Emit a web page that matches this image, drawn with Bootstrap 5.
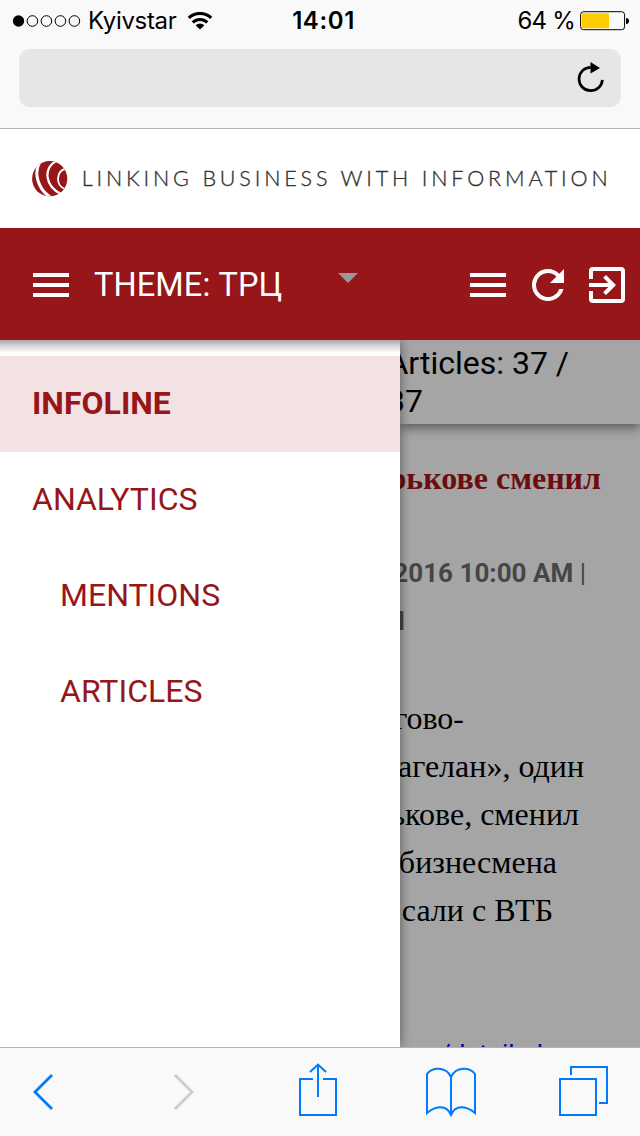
<!DOCTYPE html>
<html lang="en">
<head>
<meta charset="utf-8">
<meta name="viewport" content="width=device-width, initial-scale=1">
<title>Infoline</title>
<link href="https://cdn.jsdelivr.net/npm/bootstrap@5.3.0/dist/css/bootstrap.min.css" rel="stylesheet">
<style>
body{width:640px;height:1136px;font-family:Roboto,sans-serif;color:#000;background:#fff}
svg{display:block;flex:none}
.chrome-top{height:129px;background:#f9f9f9;border-bottom:1px solid #b2b2b2}
.statusbar{height:40px;font:400 24px/40px Inter,sans-serif;padding:1px 11px 0 12px}
.statusbar>div{flex:1 1 0}
.clock{flex:none!important;font-weight:600;letter-spacing:.6px;margin:0 -3px 0 3px}
.carrier{letter-spacing:-.35px;margin-left:7px}
.battery-level{letter-spacing:-.8px;margin-right:5px}
.urlbar{height:58px;margin:9px 19px 0;border-radius:11px;background:#e5e6e8;padding-right:16px}
.brandbar{height:99px;padding:1px 0 0 32px}
.appbar{height:112px;background:#96161a;color:#fff;padding:2px 15px 0 33px}
.theme-name{font-size:32.500px;line-height:48px;margin:0 0 0 25px;width:190px;letter-spacing:.1px;white-space:nowrap}
.drawer{width:400px;flex:none;padding-top:16px;background:linear-gradient(#a9a9a9,#cfcfcf 5px,#f4f4f4 11px,#fff 13px) #fff;background-size:100% 16px;background-repeat:no-repeat;box-shadow:1px 0 10px rgba(0,0,0,.4);z-index:2}
.drawer .list-group-item{height:96px;padding:0 32px;font-size:32px;line-height:94px;color:#96161a;background:transparent;border:0}
.drawer .list-group-item.active{background:#f2e2e3;font-weight:700}
.drawer .list-group-item.nested{padding-left:60px}
.content{width:240px;background:#a5a5a5}
.counter{height:84px;font-size:32px;line-height:38px;padding-top:4px;box-shadow:0 4px 10px rgba(0,0,0,.45)}
.line{display:flex;justify-content:flex-end;white-space:nowrap}
.serif{font-family:"Liberation Serif",serif;font-size:32px;line-height:48px}
.headline{font-weight:700;color:#6b0d11;margin-top:30px}
.meta{font-size:26px;line-height:48px;font-weight:700;color:#464646;margin-top:47px}
.story{margin-top:49px}
.source{color:#0000a0;margin-top:96px;font-size:26px;line-height:48px}
.browserbar{height:89px;flex:none;background:#f9f9f9;border-top:1px solid #b2b2b2;padding:0 32px 0 32px;z-index:3}
.forward{margin-left:119px}.share{margin:-4px 0 0 104px}.book{margin-left:89px}.tabs-icon{margin:-2px 0 0 auto}
</style>
</head>
<body class="d-flex flex-column overflow-hidden m-0">
<header class="chrome-top flex-shrink-0">
  <div class="statusbar d-flex align-items-center">
    <div class="d-flex align-items-center">
      <svg width="69" height="14" viewBox="0 0 69 14" fill="none" stroke="#000"><circle cx="6.500" cy="7" r="5.700" fill="#000" stroke="none"/><circle cx="20.400" cy="7" r="5.300"/><circle cx="34.400" cy="7" r="5.300"/><circle cx="48.400" cy="7" r="5.300"/><circle cx="62.400" cy="7" r="5.300"/></svg>
      <span class="carrier">Kyivstar</span>
      <svg style="margin-left:11px" width="26" height="18" viewBox="0 0 26 18" fill="none" stroke="#000" stroke-width="3"><path d="M1.800 5.800A16.500 16.500 0 0 1 24.200 5.800M5.700 10.400A10.500 10.500 0 0 1 20.300 10.400"/><path d="M13 17.500L8.600 13.200A6.300 6.300 0 0 1 17.400 13.200Z" fill="#000" stroke="none"/></svg>
    </div>
    <span class="clock">14:01</span>
    <div class="d-flex align-items-center justify-content-end">
      <span class="battery-level">64 %</span>
      <svg width="49" height="20" viewBox="0 0 49 20"><rect x=".6" y=".7" width="44" height="18" rx="3" fill="none" stroke="#000"/><path d="M2 2.200H29V17.200H2Z" fill="#fc0"/><path d="M46 7q3 0 3 3t-3 3z"/></svg>
    </div>
  </div>
  <div class="urlbar d-flex align-items-center justify-content-end">
    <svg width="28" height="32" viewBox="0 0 28 32"><path d="M13.700 5.300A11.700 11.700 0 1 0 25.400 17.800" fill="none" stroke="#000" stroke-width="2.700"/><path d="M13.500 0L23 6L13.500 11.500Z"/></svg>
  </div>
</header>
<div class="brandbar d-flex align-items-center flex-shrink-0">
  <svg width="36" height="36" viewBox="0 0 36 36"><defs><clipPath id="globe"><circle cx="17.700" cy="17.700" r="17.600"/></clipPath></defs><g clip-path="url(#globe)"><path fill="#96161a" d="M0 0H36V36H0z"/><g fill="none" stroke="#fff"><path stroke-width="3" d="M7.500 2C2 11 5 27 18 36"/><path stroke-width="2.200" d="M24 0C11 8 13 25 29 33"/><path stroke-width="1.800" d="M34 7.500C23.500 10 23.500 25 33 28"/></g></g></svg>
  <svg width="572" height="36" viewBox="0 0 572 36"><text x="13.700" y="25" textLength="526" font-family="Lato" font-weight="300" font-size="21.500" fill="#333" stroke="#333" stroke-width=".35">LINKING BUSINESS WITH INFORMATION</text></svg>
</div>
<nav class="appbar d-flex align-items-center flex-shrink-0">
  <svg width="36" height="24" viewBox="0 0 36 24" fill="#fff"><path d="M0 0H36V4H0zM0 10H36V14H0zM0 20H36V24H0z"/></svg>
  <span class="theme-name">THEME: ТРЦ</span>
  <svg style="margin:0 0 14px 54px" width="20" height="10" viewBox="0 0 20 10"><path d="M0 0H20L10 10z" fill="#999"/></svg>
  <div class="d-flex align-items-center ms-auto">
    <svg width="36" height="24" viewBox="0 0 36 24" fill="#fff"><path d="M0 0H36V4H0zM0 10H36V14H0zM0 20H36V24H0z"/></svg>
    <svg style="margin:0 24px 0 26px" width="33" height="32" viewBox="4 4 16.500 16"><path fill="#fff" d="M17.650 6.350A7.960 7.960 0 0 0 12 4a8 8 0 1 0 7.730 10h-2.080A6 6 0 1 1 12 6c1.660 0 3.140.690 4.220 1.780L13 11h7V4z"/></svg>
    <svg width="36" height="36" viewBox="1 3 18 18"><path fill="#fff" d="M8.090 15.590L9.500 17l5-5-5-5-1.410 1.410L10.670 11H1v2h9.670zM17 3H3a2 2 0 0 0-2 2v4h2V5h14v14H3v-4H1v4a2 2 0 0 0 2 2h14a2 2 0 0 0 2-2V5a2 2 0 0 0-2-2z"/></svg>
  </div>
</nav>
<main class="d-flex overflow-hidden flex-grow-1" style="min-height:0">
  <aside class="drawer position-relative">
    <div class="list-group list-group-flush">
      <a class="list-group-item active">INFOLINE</a>
      <a class="list-group-item">ANALYTICS</a>
      <a class="list-group-item nested">MENTIONS</a>
      <a class="list-group-item nested">ARTICLES</a>
    </div>
  </aside>
  <article class="content">
    <div class="counter">
      <div class="line" style="padding-right:71px">Articles: 37 /</div>
      <div class="line" style="padding-right:217px">37</div>
    </div>
    <div class="line serif headline" style="padding-right:39px">рькове сменил</div>
    <div class="meta">
      <div class="line" style="padding-right:54px"><span>2016 10:00 AM <span class="fw-normal">|</span></span></div>
      <div class="line" style="padding-right:235px">И</div>
    </div>
    <div class="serif story">
      <div class="line" style="padding-right:176px">гово-</div>
      <div class="line" style="padding-right:56px">агелан», один</div>
      <div class="line" style="padding-right:61px">ькове, сменил</div>
      <div class="line" style="padding-right:83px">бизнесмена</div>
      <div class="line" style="padding-right:87px">сали с ВТБ</div>
    </div>
    <div class="line source" style="padding-right:97px">/detailed</div>
  </article>
</main>
<footer class="browserbar d-flex align-items-center">
  <svg width="22" height="38" viewBox="0 0 22 38" fill="none" stroke="#007aff" stroke-width="2.800"><path d="M20 2L3 19L20 36"/></svg>
  <svg class="forward" width="22" height="38" viewBox="0 0 22 38" fill="none" stroke="#ccc" stroke-width="2.800"><path d="M2 2L19 19L2 36"/></svg>
  <svg class="share" width="38" height="54" viewBox="0 0 38 54" fill="none" stroke="#007aff" stroke-width="2"><path d="M14 16H1V52H37V16H24M19 34V1M11 9L19 1.500L27 9"/></svg>
  <svg class="book" width="50" height="50" viewBox="0 0 50 50" fill="none" stroke="#007aff" stroke-width="2"><path d="M25 10C20-1 6 0 1 7V46C8 40 20 36 25 48C30 36 42 40 49 46V7C44 0 30-1 25 10V48"/></svg>
  <svg class="tabs-icon" width="49" height="50" viewBox="0 0 49 50" fill="none" stroke="#007aff" stroke-width="2"><path d="M1 13H37V49H1zM12 9V1H48V37H40"/></svg>
</footer>
<script src="https://cdn.jsdelivr.net/npm/bootstrap@5.3.0/dist/js/bootstrap.bundle.min.js"></script>
</body>
</html>
